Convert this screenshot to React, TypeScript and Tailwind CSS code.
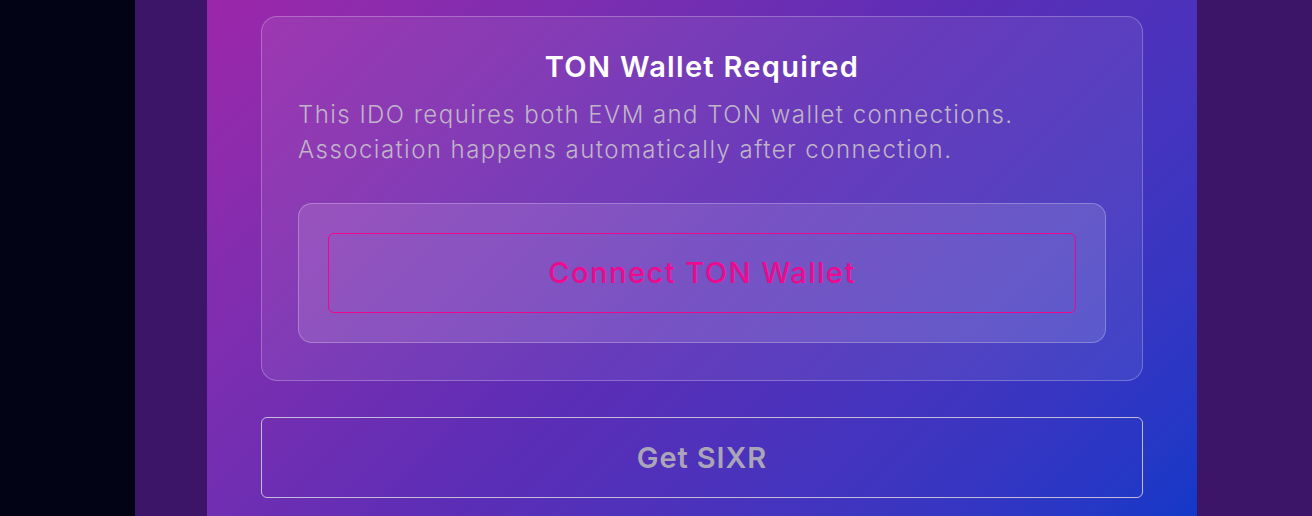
import React from 'react';

const font = { fontFamily: 'Inter, "Open Sans", sans-serif' };

const TonWalletCard: React.FC = () => {
  return (
    <div className="rounded-2xl border border-white/25 bg-white/[0.07] px-[36px] pt-[34px] pb-[37px]">
      <h2 className="text-center text-[29px] leading-[32px] font-semibold tracking-[1.3px] text-white">
        TON Wallet Required
      </h2>
      <p className="mt-[14px] text-[24px] leading-[35px] font-light tracking-[1.45px] text-[#c0b5c8]">
        This IDO requires both EVM and TON wallet connections.
        <br />
        Association happens automatically after connection.
      </p>

      <div className="mt-[36px] rounded-[14px] border border-white/25 bg-white/[0.12] p-[29px]">
        <button className="flex h-[80px] w-full items-center justify-center rounded-md border border-[#f0068c] text-[29px] font-medium tracking-[1.5px] text-[#ec0a8e]">
          Connect TON Wallet
        </button>
      </div>
    </div>
  );
};

const App: React.FC = () => {
  return (
    <div className="flex h-[516px] w-full overflow-hidden bg-[#3c1468]" style={font}>
      <div className="w-[135px] shrink-0 bg-[#020314]" />
      <div className="w-[72px] shrink-0" />

      <main className="w-[990px] shrink-0 bg-linear-135 from-[#9c26aa] via-[#5c2db6] to-[#1238c8] px-[54px] pt-[16px]">
        <TonWalletCard />

        <button className="mt-[36px] flex h-[81px] w-full items-center justify-center rounded-md border border-[#c4bcd8] text-[29px] font-semibold tracking-[0.9px] text-[#aaa6b8]">
          Get SIXR
        </button>
      </main>
    </div>
  );
};

export default App;
